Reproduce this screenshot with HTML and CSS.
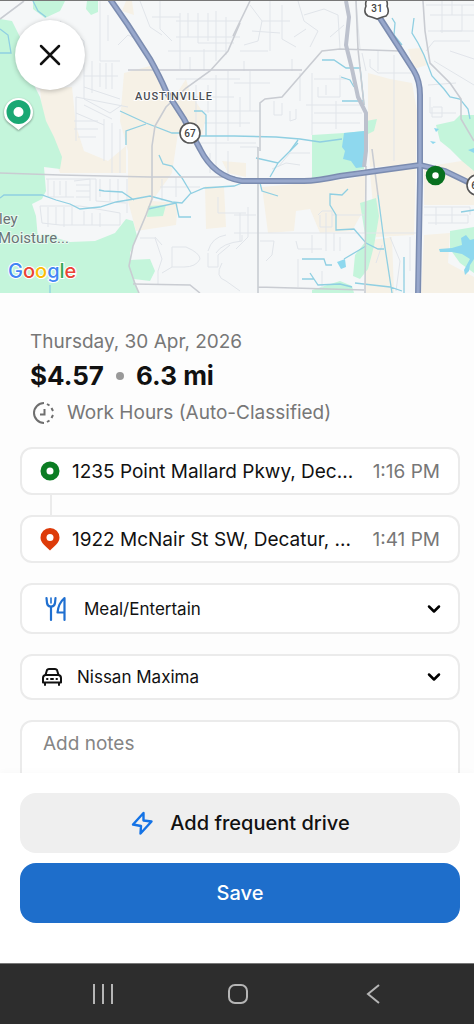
FILE: index.html
```html
<!DOCTYPE html>
<html lang="en">
<head>
    <meta charset="UTF-8">
    <meta name="viewport" content="width=device-width, initial-scale=1.0">
    <title>Drive Details</title>
    <link rel="stylesheet" href="styles.css">
</head>
<body>
    <main class="content">
        <div class="map">
            <svg class="map-canvas" viewBox="0 0 474 292" preserveAspectRatio="xMidYMid slice" role="img" aria-label="Map of the drive">
                <rect width="474" height="292" fill="#f5f7f8"/>
                <!-- built-up areas -->
                <g fill="#f6f1e6">
                    <path d="M40 88L72 86L76 125L84 150L108 160L126 145L126 172L60 172L44 130Z"/>
                    <path d="M124 72L150 65L164 82L172 100L186 78L190 92L206 116L202 134L178 132L172 172L152 200L178 202L176 224L136 230L128 200L128 150L120 120Z"/>
                    <path d="M126 0H132L134 14L122 10ZM205 185L224 186L226 226L206 228ZM222 160L246 162V176L228 172Z"/>
                    <path d="M262 186L350 178L366 174L364 208L352 230L320 232L310 208L296 210L294 230L268 232Z"/>
                    <path d="M368 72L390 78L412 82L417 110L416 164L370 166L368 130Z"/>
                    <path d="M370 172L416 166L414 234L376 236ZM408 48L422 47L427 64L414 68Z"/>
                    <path d="M424 166L474 158V204H424ZM424 234L450 232L448 262L474 276V292H421ZM366 240L392 236L394 292H366Z"/>
                </g>
                <!-- parks -->
                <g fill="#c4f5db">
                    <path d="M0 18L12 20L22 40L32 80L40 96L46 120L54 136L62 156L60 168L44 166L46 190L42 198L32 203L36 215L38 238L50 235L70 241L95 240L115 232L126 218L133 220L137 235L130 252L130 259L150 258L155 270L150 280L134 278L139 292H0Z"/>
                    <path d="M33 0H65L60 10L45 17L33 8ZM87 0H98V11L91 14L86 8Z"/>
                    <path d="M312 134L344 132L364 130V168L350 171L312 177ZM148 205L166 204L163 215L147 216Z"/>
                    <path d="M436 124L454 120L460 114L474 114V170L462 160L450 148L440 140ZM366 120L377 118L374 130L366 134Z"/>
                    <path d="M360 202L376 197L379 215L374 245L368 268L360 278L353 275L355 254L366 240Z"/>
                    <path d="M450 230L474 226V272L460 262L450 248ZM312 289L340 280L352 285L354 292H312Z"/>
                </g>
                <!-- lakes -->
                <g fill="#8ed8ee">
                    <path d="M344 132L364 130V166L356 167L351 160L343 158L345 150L342 146ZM337 261L345 258L346 266L341 268Z"/>
                    <path d="M439 248L452 247L462 244L461 237L466 234L470 239L474 238V258L470 264L469 270L465 274L464 269L470 258L462 253L452 251L440 251Z"/>
                    <path d="M434 127L439 128L436 131ZM430 140L436 141L433 143ZM468 149L474 147V152Z"/>
                </g>
                <!-- side streets -->
                <g fill="none" stroke="#e1e5ea" stroke-width="1">
                    <path d="M60 20L84 40V98L110 112L122 104M100 0V60H120M108 14V40M118 44L128 34L140 40M84 75H118M92 60V92M100 62V86M106 62V88M112 62V88M84 86L120 98"/>
                    <path d="M76 96V140M84 104L112 118M76 112L104 124M74 120H98M74 128H98M78 136H96M104 118V160M112 122V172M120 128V172M76 96L128 106"/>
                    <path d="M140 0L150 26L162 34M152 16H180M160 0V28L172 40M176 20H240M180 12V68M188 12V36M198 12V42H234M208 12V40M216 10V60M226 16V54M176 36H240M168 50H226M190 56V70M204 48V70"/>
                    <path d="M176 78H240M184 96H234M196 84V130M208 84V112M216 74V172M228 70V140M204 110H260M204 122H250M200 142H256M210 152V172M228 150V176M240 146H258"/>
                    <path d="M46 178H96V200L126 202M48 178V196H74M54 180V196M60 180V194M66 180V196M74 180L90 178V200M76 184H90M76 190H90M76 196H90M100 178V196M110 178V200M118 178V200M127 178V212"/>
                    <path d="M40 205H80L120 212V224H60L42 222ZM48 206V226M56 206V224M64 206V226M72 206V224M84 210V224M92 212V224M100 212V226"/>
                    <path d="M140 237H155L162 258L158 270V284M155 236L162 244M172 246H186Q200 252 200 258Q196 266 184 266H172V246M162 272L172 266M208 252V266H218V254L230 244M208 250Q212 236 226 234M216 252Q222 242 242 240V234M222 262Q214 276 226 280L240 290M160 186H200M162 178V200M176 176V196M218 196V212H246"/>
                    <path d="M250 4L262 20L258 40L244 44M262 20H290M270 0V50M282 4V38L296 46M252 30L280 32M298 0L304 20L318 30L310 46M304 14L324 8L338 14M294 36L306 28M240 50H268M244 60V70M292 58V70"/>
                    <path d="M234 82H270M250 70V110M240 96V126M274 100V114H282V102M290 110V120L296 118V108M300 72V100M312 72V134M314 78H346M318 86V96H340V74M306 104H362M314 112H362M312 122H360M326 84V94M336 100V128"/>
                    <path d="M338 14L340 48M356 0L360 48M330 36L344 24M362 52L366 70M370 58V66L378 72H412M378 50V70M394 54V160M426 4H474M430 14H474M442 0V32M452 0V14M462 4V30H440M428 30H474M434 60L474 84M450 50L474 58M428 84L456 82M430 96V112H456M433 106H442V116H432V106"/>
                    <path d="M234 214H256M240 212V240M248 206V236L236 248M234 232H416M260 240H274L272 254L266 260M296 240L298 248H322M318 214L322 210H332V226H320V214M326 212V250M334 232V250M340 236V250M312 234V252M298 258V286M322 270V288M332 214H364"/>
                    <path d="M424 214H468V222H428M424 206H470V214M436 206V224M452 206V222M376 262L382 244M390 236L400 260L396 290M410 236V270M278 166L290 152H310M272 168L286 162L300 164M426 50L434 40H470"/>
                </g>
                <!-- streams -->
                <g fill="none" stroke="#8fcfe2" stroke-width="1.3">
                    <path d="M0 28L8 34L11 52H0M33 0L38 10L46 16M120 110L146 122L172 132H186M126 144V130L146 123M194 110H202L206 114V135H234L276 136L300 138L320 141L342 138M200 135H206M290 150L298 139"/>
                    <path d="M0 197L4 194H42L56 199L70 203L80 208L100 206L116 201L134 198L150 195L172 201L182 202L190 193L204 187L234 185L242 182M99 189L104 190L122 191L134 199M159 154L163 163L172 165L182 177L191 192M148 208L176 202L179 216H191"/>
                    <path d="M322 59H334L346 67H360M341 76L350 79L354 86M342 100H364M360 66L364 104M392 17L395 22L394 34L402 44M414 17L412 32L418 42L424 54L432 75L444 88L450 96L460 98L468 108L470 118"/>
                    <path d="M256 157L278 162L298 142M278 162L270 176M260 182L262 190L278 195M348 188L342 194L330 193V204L336 214V229L354 228L366 242L378 248H384M378 194L384 240L392 292M366 245L344 258M302 258H324L326 264H332M310 272L318 284L340 283L352 286M302 278H314M355 282L390 286L402 290M404 256V292M461 211L474 209M50 284V292"/>
                </g>
                <!-- secondary roads -->
                <g fill="none" stroke="#c9ccd2" stroke-width="1.6">
                    <path d="M0 172L60 174L150 176H235M240 22L228 50L210 70L186 87L166 106L155 125L152 145V198L146 214L133 245L129 265L135 283L139 292M133 283L190 284L200 292"/>
                    <path d="M128 69H302M250 0L233 35M260 150V102L265 98L282 96L322 50L340 48L400 50M258 146V292M258 286L364 289M366 165L365 292M356 0L358 48L364 104M423 0L425 30L430 62L450 82L461 98V118L474 140M0 18L24 0M372 148L378 194"/>
                </g>
                <path d="M346 0L349 16L346 44L352 68L358 96L366 112V150L364 166" fill="none" stroke="#bcc1cd" stroke-width="4"/>
                <!-- highways: dark casing, then lighter fill -->
                <g fill="none" stroke="#7b8cb0" stroke-width="6">
                    <path d="M110 -2L128 24L150 58Q160 76 166 90L184 118L200 148Q214 176 242 180H304Q316 180 340 175L420 164L445 170L474 184"/>
                    <path d="M378 14L400 48L414 70Q420 80 420 94V180L418 294"/>
                </g>
                <g fill="none" stroke="#98a8cc" stroke-width="3">
                    <path d="M110 -2L128 24L150 58Q160 76 166 90L184 118L200 148Q214 176 242 180H304Q316 180 340 175L420 164L445 170L474 184"/>
                    <path d="M378 14L400 48L414 70Q420 80 420 94V180L418 294"/>
                </g>
                <!-- route shields -->
                <g fill="#fff" stroke="#555" stroke-width="1.6">
                    <circle cx="190" cy="132" r="10"/>
                    <circle cx="477" cy="184" r="10"/>
                    <path d="M367 -2Q365 2 366 5Q363 12 368 15Q372 16 377 18Q382 16 386 15Q390 12 387 5Q388 2 386 -2Z"/>
                </g>
                <g class="shield-text">
                    <text x="190" y="136">67</text>
                    <text x="377" y="11">31</text>
                    <text x="477" y="188">67</text>
                </g>
                <text class="area-name" x="174" y="99">AUSTINVILLE</text>
                <text class="place-name" x="-1" y="223">ley</text>
                <text class="place-name" x="-2" y="242">Moisture...</text>
                <text class="map-brand" x="8" y="277"><tspan fill="#4285f4">G</tspan><tspan fill="#ea4335">o</tspan><tspan fill="#fbbc05">o</tspan><tspan fill="#4285f4">g</tspan><tspan fill="#34a853">l</tspan><tspan fill="#ea4335">e</tspan></text>
                <!-- drive markers -->
                <path class="pin" d="M18.500 97A14.500 14.500 0 0 0 4 111.500C4 121 12 123 18.500 129C25 123 33 121 33 111.500A14.500 14.500 0 0 0 18.500 97Z" fill="#fff"/>
                <circle cx="18.500" cy="111" r="8.500" fill="#fff" stroke="#1aa874" stroke-width="7"/>
                <circle cx="435.500" cy="174.500" r="6.500" fill="#fff" stroke="#08701f" stroke-width="6.500"/>
            </svg>
            <button class="close-button" aria-label="Close">
                <svg width="22" height="22" viewBox="0 0 22 22" fill="none" stroke="#111" stroke-width="2.500" stroke-linecap="round"><path d="M2 2L20 20M20 2L2 20"/></svg>
            </button>
        </div>

        <section class="details">
            <p class="date">Thursday, 30 Apr, 2026</p>
            <h1 class="summary">$4.57 <span class="dot"></span> 6.3 mi</h1>
            <p class="class-type">
                <svg width="26" height="26" viewBox="0 0 26 26" fill="none" stroke="#6e6e6e" stroke-width="2">
                    <path d="M14 3A10 10 0 0 0 14 23"/>
                    <path d="M17 4L19.500 5.500M21.500 8L23 11M23 15L21.500 18M19.500 20.500L17 22"/>
                    <path d="M14.500 9V14.500H10"/>
                </svg>
                Work Hours (Auto-Classified)
            </p>

            <div class="stop">
                <svg width="20" height="24" viewBox="0 0 20 24"><circle cx="10" cy="12" r="6.500" fill="#fff" stroke="#0b7d23" stroke-width="6"/></svg>
                <span class="address">1235 Point Mallard Pkwy, Dec...</span>
                <span class="time">1:16 PM</span>
            </div>
            <div class="connector"></div>
            <div class="stop">
                <svg width="20" height="24" viewBox="0 0 20 24"><path d="M10 1A9.500 9.500 0 0 0 .5 10.500C.5 16 6 19.500 10 23.500C14 19.500 19.500 16 19.500 10.500A9.500 9.500 0 0 0 10 1Z" fill="#dd3b0a"/><circle cx="10" cy="10.500" r="3.500" fill="#fff"/></svg>
                <span class="address">1922 McNair St SW, Decatur, ...</span>
                <span class="time">1:41 PM</span>
            </div>

            <div class="picker purpose">
                <svg width="24" height="26" viewBox="0 0 24 26" fill="none" stroke="#1f6fd0" stroke-width="2.200" stroke-linecap="round" stroke-linejoin="round">
                    <path d="M2.500 2L3 7Q3.500 10.500 7 10.500Q10.500 10.500 11 7L11.500 2M7 10.500V24"/>
                    <path d="M7 2V7" stroke-width="1.600"/>
                    <path d="M20.500 24V2Q14.500 7 13.500 16.500H20.500"/>
                </svg>
                <select aria-label="Purpose">
                    <option>Meal/Entertain</option>
                </select>
                <svg class="chevron" width="16" height="16" viewBox="0 0 16 16"><path d="M3 5.500L8 10.500L13 5.500"/></svg>
            </div>

            <div class="picker vehicle">
                <svg width="22" height="20" viewBox="0 0 22 20" fill="none" stroke="#111" stroke-width="2" stroke-linecap="round" stroke-linejoin="round">
                    <path d="M4.500 8L6 3Q6.500 2 8 2H14Q15.500 2 16 3L17.500 8"/>
                    <path d="M4.500 8H17.500Q20 8.500 20 11V15.500H2V11Q2 8.500 4.500 8ZM4 16V18M18 16V18M6 12H6.500M10 12H12M15.500 12H16"/>
                </svg>
                <select aria-label="Vehicle">
                    <option>Nissan Maxima</option>
                </select>
                <svg class="chevron" width="16" height="16" viewBox="0 0 16 16"><path d="M3 5.500L8 10.500L13 5.500"/></svg>
            </div>

            <textarea class="notes" placeholder="Add notes" aria-label="Notes"></textarea>
        </section>
    </main>

    <div class="actions">
        <button class="action-button frequent-button">
            <svg width="24" height="26" viewBox="0 0 24 26" fill="none" stroke="#1473e6" stroke-width="2.400" stroke-linejoin="round"><path d="M13.500 3L3 14.500L11 16L10.500 23.500L21.500 11.500L13.500 10.500Z"/></svg>
            Add frequent drive
        </button>
        <button class="action-button save-button">Save</button>
    </div>

    <nav class="system-bar">
        <button aria-label="Recent apps"><svg width="24" height="24" viewBox="0 0 24 24"><path d="M3 2V22M12 2V22M21 2V22"/></svg></button>
        <button aria-label="Home"><svg width="24" height="24" viewBox="0 0 24 24"><rect x="3" y="3" width="18" height="18" rx="6"/></svg></button>
        <button aria-label="Back"><svg width="24" height="24" viewBox="0 0 24 24"><path d="M18 3L7 12L18 21"/></svg></button>
    </nav>
</body>
</html>
```
FILE: styles.css
```css
* {
    box-sizing: border-box;
}
body {
    display: flex;
    flex-direction: column;
    height: 100vh;
    margin: 0;
    font-family: Inter, "Liberation Sans", sans-serif;
    background: #fdfdfd;
    color: #111;
}
button,
select,
textarea {
    font-family: inherit;
}
.content {
    flex: 1;
    min-height: 0;
    overflow: hidden;
}
.map {
    position: relative;
    border-top: 1px solid #777;
}
.map-canvas {
    display: block;
    width: 100%;
}
.shield-text {
    font: 500 10px Roboto, sans-serif;
    fill: #444;
    text-anchor: middle;
}
.area-name {
    font: 500 11px Roboto, sans-serif;
    letter-spacing: 1px;
    fill: #4a4d52;
    stroke: #fff;
    stroke-width: 2px;
    paint-order: stroke;
    text-anchor: middle;
}
.place-name {
    font: 400 15px Roboto, sans-serif;
    fill: #6a7476;
    stroke: #e8faf0;
    stroke-width: 2px;
    paint-order: stroke;
}
.map-brand {
    font: 500 20px Inter, sans-serif;
    stroke: #fff;
    stroke-width: 2px;
    paint-order: stroke;
}
.pin {
    filter: drop-shadow(0 1px 1px rgba(0,0,0,0.4));
}
.close-button {
    position: absolute;
    top: 19px;
    left: 15px;
    display: flex;
    align-items: center;
    justify-content: center;
    width: 70px;
    height: 70px;
    padding: 0;
    border: none;
    border-radius: 50%;
    background: #fff;
    box-shadow: 0 1px 5px rgba(0,0,0,0.25);
}
.details {
    padding: 35px 14px 20px 20px;
}
.date,
.summary,
.class-type {
    margin: 0;
    padding: 0 10px;
}
.date {
    font-size: 19px;
    line-height: 28px;
    color: #777;
}
.summary {
    display: flex;
    align-items: center;
    gap: 12px;
    font-size: 26px;
    line-height: 40px;
    font-weight: 700;
}
.dot {
    width: 8px;
    height: 8px;
    border-radius: 50%;
    background: #999;
}
.class-type {
    display: flex;
    align-items: center;
    gap: 11px;
    margin-bottom: 17px;
    font-size: 19px;
    line-height: 34px;
    color: #777;
}
.stop,
.picker,
.notes {
    border: 2px solid #ebebeb;
    border-radius: 12px;
    background: #fff;
}
.stop {
    display: flex;
    align-items: center;
    height: 48px;
    padding: 0 18px;
    font-size: 19px;
}
.address {
    flex: 1;
    margin-left: 12px;
    white-space: nowrap;
    overflow: hidden;
}
.time {
    color: #777;
}
.connector {
    width: 2px;
    height: 20px;
    margin-left: 30px;
    background: #ebebeb;
}
.picker {
    display: flex;
    align-items: center;
    margin-top: 20px;
    padding-right: 16px;
}
.picker select {
    flex: 1;
    padding: 0;
    border: none;
    background: none;
    appearance: none;
    font-size: 17px;
    color: #111;
}
.purpose {
    gap: 16px;
    height: 51px;
    padding-left: 22px;
}
.vehicle {
    gap: 14px;
    height: 46px;
    padding-left: 19px;
}
.chevron {
    fill: none;
    stroke: #000;
    stroke-width: 2.5px;
    stroke-linecap: round;
    stroke-linejoin: round;
    pointer-events: none;
}
.notes {
    display: block;
    width: 100%;
    height: 110px;
    margin-top: 20px;
    padding: 8px 21px;
    font-size: 19px;
    line-height: 28px;
    resize: none;
}
.notes::placeholder {
    color: #858585;
}
.actions {
    display: flex;
    flex-direction: column;
    gap: 10px;
    padding: 20px 14px 40px 20px;
    background: #fff;
    box-shadow: 0 -2px 6px rgba(0,0,0,0.02);
}
.action-button {
    display: flex;
    align-items: center;
    justify-content: center;
    gap: 16px;
    height: 60px;
    border: none;
    border-radius: 16px;
    font-size: 20px;
    font-weight: 500;
}
.frequent-button {
    background: #efefef;
    color: #111;
}
.save-button {
    background: #1e6ecb;
    color: #fff;
}
.system-bar {
    display: flex;
    justify-content: space-around;
    align-items: center;
    height: 61px;
    padding: 0 34px 0 36px;
    border-top: 1px solid #777;
    background: #2d2d2d;
}
.system-bar button {
    display: flex;
    padding: 0;
    border: none;
    background: none;
}
.system-bar svg {
    fill: none;
    stroke: #b5b5b5;
    stroke-width: 2px;
}
```
